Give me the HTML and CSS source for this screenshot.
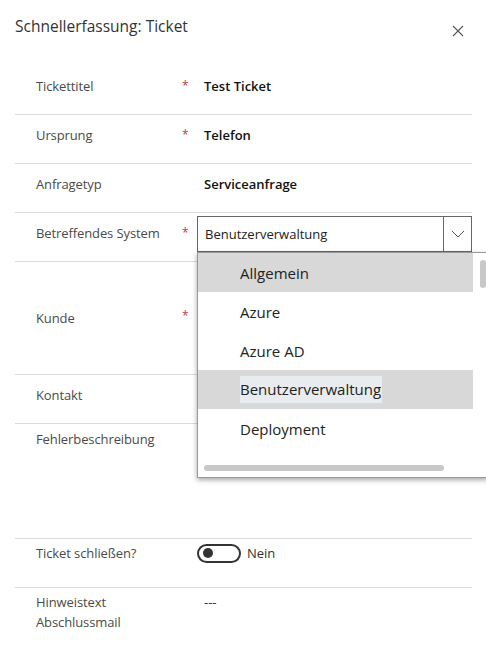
FILE: index.html
```html
<!DOCTYPE html>
<html lang="de">
<head>
<meta charset="utf-8">
<title>Schnellerfassung: Ticket</title>
<link rel="stylesheet" href="styles.css">
</head>
<body>
<div class="panel">
  <header class="header">
    <h1 class="title">Schnellerfassung: Ticket</h1>
    <button class="close" aria-label="Schließen">
      <svg width="12" height="12" viewBox="0 0 12 12"><path d="M1 1L11 11M11 1L1 11" stroke="#555" stroke-width="1.1" fill="none"/></svg>
    </button>
  </header>
  <div class="form">
    <div class="row">
      <div class="label">Tickettitel</div>
      <div class="req">*</div>
      <div class="value strong">Test Ticket</div>
    </div>
    <div class="row">
      <div class="label">Ursprung</div>
      <div class="req">*</div>
      <div class="value strong">Telefon</div>
    </div>
    <div class="row">
      <div class="label">Anfragetyp</div>
      <div class="req"></div>
      <div class="value strong">Serviceanfrage</div>
    </div>
    <div class="row row-select">
      <div class="label">Betreffendes System</div>
      <div class="req">*</div>
      <div class="select">
        <span class="select-text">Benutzerverwaltung</span>
        <span class="select-arrow">
          <svg width="14" height="8" viewBox="0 0 14 8"><path d="M1 1L7 7L13 1" stroke="#555" stroke-width="1" fill="none"/></svg>
        </span>
      </div>
    </div>
    <div class="row row-tall">
      <div class="label">Kunde</div>
      <div class="req">*</div>
      <div class="value"></div>
    </div>
    <div class="row">
      <div class="label">Kontakt</div>
      <div class="req"></div>
      <div class="value"></div>
    </div>
    <div class="row row-text">
      <div class="label">Fehlerbeschreibung</div>
      <div class="req"></div>
      <div class="value"></div>
    </div>
    <div class="row row-compact">
      <div class="label">Ticket schließen?</div>
      <div class="req"></div>
      <div class="toggle-wrap">
        <span class="toggle"><span class="knob"></span></span>
        <span class="toggle-label">Nein</span>
      </div>
    </div>
    <div class="row row-compact row-last">
      <div class="label">Hinweistext<br>Abschlussmail</div>
      <div class="req"></div>
      <div class="value dash">---</div>
    </div>
  </div>

  <div class="menu">
    <div class="menu-list">
      <div class="item hover">Allgemein</div>
      <div class="item">Azure</div>
      <div class="item">Azure AD</div>
      <div class="item selected"><span class="sel-text">Benutzerverwaltung</span></div>
      <div class="item">Deployment</div>
    </div>
    <div class="vscroll"></div>
    <div class="hscroll"></div>
  </div>
</div>
</body>
</html>
```

FILE: styles.css
```css
* { box-sizing: border-box; }
html, body {
  margin: 0;
  padding: 0;
  background: #fff;
}
body {
  font-family: "Segoe UI", "Open Sans", "Noto Sans", sans-serif;
  color: #333;
}
.panel {
  position: relative;
  width: 486px;
  height: 654px;
  overflow: hidden;
}
.header {
  display: flex;
  justify-content: space-between;
  align-items: flex-start;
  height: 66px;
  padding: 15px 22px 0 15px;
}
.title {
  margin: 0;
  font-size: 15.5px;
  font-weight: 400;
  color: #333;
  line-height: 22px;
}
.close {
  border: 0;
  background: none;
  padding: 0;
  margin-top: 10px;
  width: 12px;
  height: 12px;
  display: flex;
}
.form {
  margin: 0 14px 0 15px;
}
.row {
  display: grid;
  grid-template-columns: 146px 15px 1fr;
  padding-left: 21px;
  min-height: 49px;
  padding-top: 10px;
  border-bottom: 1px solid #dcdcdc;
  font-size: 13px;
  line-height: 20px;
}
.row-last { border-bottom: 0; }
.label {
  color: #4a4a4a;
  letter-spacing: -0.1px;
}
.req {
  color: #c0394b;
  font-size: 12px;
}
.value {
  padding-left: 7px;
  color: #111;
}
.strong { font-weight: 600; }
.row-select { padding-top: 3px; }
.row-select .label, .row-select .req { padding-top: 7px; }
.select {
  display: flex;
  height: 36px;
  border: 1px solid #666;
  width: 275px;
}
.select-text {
  flex: 1;
  padding: 7px 7px;
  color: #222;
}
.select-arrow {
  width: 28px;
  border-left: 1px solid #666;
  display: flex;
  align-items: center;
  justify-content: center;
}
.row-tall {
  min-height: 113px;
  padding-top: 0;
  align-items: center;
}
.row-tall .req { margin-top: -4px; }
.row-text {
  min-height: 115px;
  padding-top: 5px;
}
.row-compact {
  padding-top: 4px;
}
.toggle-wrap {
  display: flex;
  align-items: center;
  gap: 6px;
  height: 20px;
}
.toggle {
  display: flex;
  align-items: center;
  width: 44px;
  height: 19px;
  border: 2px solid #333;
  border-radius: 10px;
  padding-left: 4px;
}
.knob {
  width: 10px;
  height: 10px;
  border-radius: 50%;
  background: #333;
}
.toggle-label { color: #333; }
.dash { color: #333; }

/* Dropdown overlay */
.menu {
  position: absolute;
  left: 197px;
  top: 252px;
  width: 291px;
  height: 226px;
  background: #fff;
  border: 1px solid #999;
  box-shadow: 0 2px 5px rgba(0,0,0,0.35);
  overflow: hidden;
}
.menu-list {
  display: flex;
  flex-direction: column;
  width: 275px;
}
.item {
  height: 39px;
  display: flex;
  align-items: center;
  padding-left: 42px;
  font-size: 15px;
  color: #222;
}
.item.hover, .item.selected { background: #d8d8d8; }
.sel-text {
  background: #e9ecee;
  padding: 0 1px 0 0;
  line-height: 27px;
}
.vscroll {
  position: absolute;
  left: 282px;
  top: 7px;
  width: 6px;
  height: 28px;
  border-radius: 3px;
  background: #c8c8c8;
}
.hscroll {
  position: absolute;
  left: 6px;
  top: 212px;
  width: 240px;
  height: 6px;
  border-radius: 3px;
  background: #c8c8c8;
}
```
